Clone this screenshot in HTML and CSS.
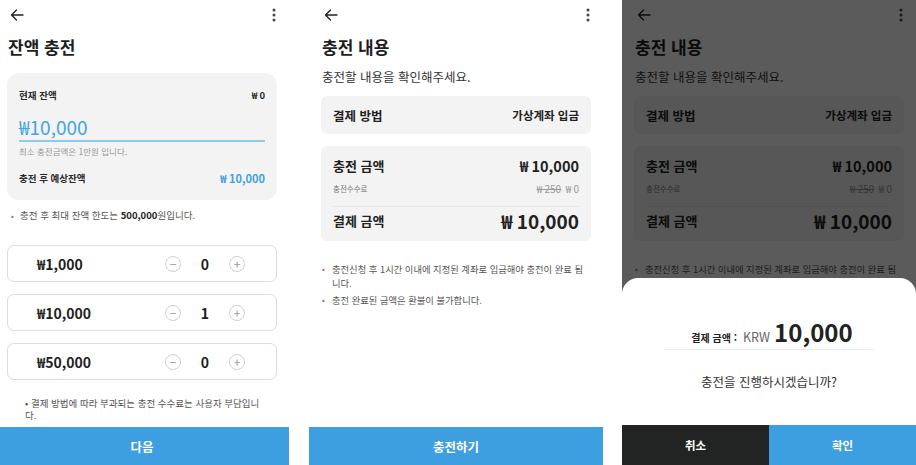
FILE: index.html
```html
<!DOCTYPE html>
<html lang="ko">
<head>
<meta charset="utf-8">
<link rel="stylesheet" href="styles.css">
</head>
<body>
<div class="screens">
  <!-- Screen 1 -->
  <section class="screen screen-first">
    <header class="topbar">
      <svg class="ico-back" width="14" height="12" viewBox="0 0 14 12"><path d="M13 6H1.5M6.5 1L1.5 6l5 5" fill="none" stroke="#222" stroke-width="1.4" stroke-linecap="round" stroke-linejoin="round"/></svg>
      <svg class="ico-more" width="4" height="14" viewBox="0 0 4 14"><circle cx="2" cy="2" r="1.5" fill="#444"/><circle cx="2" cy="7" r="1.5" fill="#444"/><circle cx="2" cy="12" r="1.5" fill="#444"/></svg>
    </header>
    <div class="content c1">
      <h1 class="title">잔액 충전</h1>
      <div class="balance-card">
        <div class="row-between">
          <span class="lbl-bold">현재 잔액</span>
          <span class="lbl-bold">₩ 0</span>
        </div>
        <div class="amount-input">₩10,000</div>
        <div class="hint">최소 충전금액은 1만원 입니다.</div>
        <div class="row-between expected">
          <span class="lbl-bold">충전 후 예상잔액</span>
          <span class="blue-amount">₩ 10,000</span>
        </div>
      </div>
      <p class="note-limit"><span class="dot">•</span>충전 후 최대 잔액 한도는 <b>500,000</b>원입니다.</p>
      <div class="qty-list">
        <div class="qty-row">
          <span class="qty-label">₩1,000</span>
          <div class="stepper">
            <span class="circ">−</span><span class="count">0</span><span class="circ">+</span>
          </div>
        </div>
        <div class="qty-row">
          <span class="qty-label">₩10,000</span>
          <div class="stepper">
            <span class="circ">−</span><span class="count">1</span><span class="circ">+</span>
          </div>
        </div>
        <div class="qty-row">
          <span class="qty-label">₩50,000</span>
          <div class="stepper">
            <span class="circ">−</span><span class="count">0</span><span class="circ">+</span>
          </div>
        </div>
      </div>
      <p class="note-fee">• 결제 방법에 따라 부과되는 충전 수수료는 사용자 부담입니다.</p>
    </div>
    <button class="cta">다음</button>
  </section>

  <!-- Screen 2 -->
  <section class="screen">
    <header class="topbar">
      <svg class="ico-back" width="14" height="12" viewBox="0 0 14 12"><path d="M13 6H1.5M6.5 1L1.5 6l5 5" fill="none" stroke="#222" stroke-width="1.4" stroke-linecap="round" stroke-linejoin="round"/></svg>
      <svg class="ico-more" width="4" height="14" viewBox="0 0 4 14"><circle cx="2" cy="2" r="1.5" fill="#444"/><circle cx="2" cy="7" r="1.5" fill="#444"/><circle cx="2" cy="12" r="1.5" fill="#444"/></svg>
    </header>
    <div class="content c2">
      <h1 class="title">충전 내용</h1>
      <p class="subtitle">충전할 내용을 확인해주세요.</p>
      <div class="method-card">
        <span class="m-label">결제 방법</span>
        <span class="m-value">가상계좌 입금</span>
      </div>
      <div class="sum-card">
        <div class="row-between s-row1">
          <span class="s-label">충전 금액</span>
          <span class="s-amt">₩ 10,000</span>
        </div>
        <div class="row-between s-fee">
          <span class="fee-lbl">충전수수료</span>
          <span class="fee-val"><s>₩ 250</s>&nbsp;&nbsp;₩ 0</span>
        </div>
        <div class="row-between s-total">
          <span class="s-label">결제 금액</span>
          <span class="s-big">₩ 10,000</span>
        </div>
      </div>
      <ul class="notes">
        <li>충전신청 후 1시간 이내에 지정된 계좌로 입금해야 충전이 완료 됩니다.</li>
        <li>충전 완료된 금액은 환불이 불가합니다.</li>
      </ul>
    </div>
    <button class="cta">충전하기</button>
  </section>

  <!-- Screen 3 -->
  <section class="screen">
    <header class="topbar">
      <svg class="ico-back" width="14" height="12" viewBox="0 0 14 12"><path d="M13 6H1.5M6.5 1L1.5 6l5 5" fill="none" stroke="#222" stroke-width="1.4" stroke-linecap="round" stroke-linejoin="round"/></svg>
      <svg class="ico-more" width="4" height="14" viewBox="0 0 4 14"><circle cx="2" cy="2" r="1.5" fill="#444"/><circle cx="2" cy="7" r="1.5" fill="#444"/><circle cx="2" cy="12" r="1.5" fill="#444"/></svg>
    </header>
    <div class="content c2">
      <h1 class="title">충전 내용</h1>
      <p class="subtitle">충전할 내용을 확인해주세요.</p>
      <div class="method-card">
        <span class="m-label">결제 방법</span>
        <span class="m-value">가상계좌 입금</span>
      </div>
      <div class="sum-card">
        <div class="row-between s-row1">
          <span class="s-label">충전 금액</span>
          <span class="s-amt">₩ 10,000</span>
        </div>
        <div class="row-between s-fee">
          <span class="fee-lbl">충전수수료</span>
          <span class="fee-val"><s>₩ 250</s>&nbsp;&nbsp;₩ 0</span>
        </div>
        <div class="row-between s-total">
          <span class="s-label">결제 금액</span>
          <span class="s-big">₩ 10,000</span>
        </div>
      </div>
      <ul class="notes">
        <li>충전신청 후 1시간 이내에 지정된 계좌로 입금해야 충전이 완료 됩니다.</li>
        <li>충전 완료된 금액은 환불이 불가합니다.</li>
      </ul>
    </div>
    <button class="cta">충전하기</button>
    <div class="dim"></div>
    <div class="sheet">
      <div class="pay-line">
        <span class="pay-lbl">결제 금액 :</span>
        <span class="pay-cur">KRW</span>
        <span class="pay-num">10,000</span>
      </div>
      <p class="question">충전을 진행하시겠습니까?</p>
      <div class="sheet-btns">
        <button class="btn-cancel">취소</button>
        <button class="btn-ok">확인</button>
      </div>
    </div>
  </section>
</div>
</body>
</html>
```

FILE: styles.css
```css
* { box-sizing: border-box; margin: 0; padding: 0; }
html, body { width: 916px; height: 465px; overflow: hidden; background: #fff; }
body {
  font-family: "Noto Sans CJK KR", "Noto Sans", sans-serif;
  color: #222;
}
.screens {
  display: flex;
  gap: 20px;
  height: 465px;
}
.screen {
  position: relative;
  width: 294px;
  height: 465px;
  flex: none;
  display: flex;
  flex-direction: column;
  background: #fff;
  overflow: hidden;
}
.screen-first { margin-left: -5px; }
.screen + .screen + .screen { margin-left: -1px; }

.topbar {
  height: 30px;
  display: flex;
  align-items: center;
  justify-content: space-between;
  padding: 0 13px 0 15px;
}
.ico-back { display: block; }
.ico-more { display: block; }

.content { padding: 0 12px; display: flex; flex-direction: column; }

.title {
  font-size: 17px;
  font-weight: 700;
  line-height: 24px;
  margin-top: 5px;
  padding-left: 1px;
  color: #1e1e1e;
}

/* Screen 1 */
.balance-card {
  margin-top: 14px;
  background: #f3f3f3;
  border-radius: 12px;
  padding: 14px 12px 14px 12px;
}
.row-between { display: flex; justify-content: space-between; align-items: center; }
.lbl-bold { font-size: 9.5px; font-weight: 700; line-height: 16px; color: #2a2a2a; }
.amount-input {
  margin-top: 12px;
  font-size: 19px;
  line-height: 24px;
  color: #42a6e0;
  border-bottom: 2px solid #8fcaee;
  padding-bottom: 1px;
}
.hint { margin-top: 3px; font-size: 8.5px; line-height: 12px; color: #999; }
.expected { margin-top: 13px; }
.blue-amount { font-size: 11px; font-weight: 700; color: #3fa3df; line-height: 16px; }

.note-limit {
  margin-top: 8px;
  font-size: 9.5px;
  line-height: 14px;
  color: #555;
  padding-left: 4px;
}
.note-limit b { color: #222; font-weight: 700; }
.dot { display: inline-block; width: 9px; color: #777; font-size: 8px; }

.qty-list { margin-top: 22px; display: flex; flex-direction: column; gap: 12px; }
.qty-row {
  height: 37px;
  border: 1px solid #dcdcdc;
  border-radius: 7px;
  display: flex;
  align-items: center;
  justify-content: space-between;
  padding: 0 31px 0 29px;
}
.qty-label { font-size: 14px; font-weight: 700; color: #1e1e1e; }
.stepper { display: flex; align-items: center; }
.circ {
  width: 16px; height: 16px;
  border: 1px solid #d0d0d0;
  border-radius: 50%;
  display: flex; align-items: center; justify-content: center;
  font-size: 12px; color: #999; line-height: 1;
}
.count { width: 48px; text-align: center; font-size: 14px; font-weight: 700; color: #1e1e1e; }

.note-fee {
  margin-top: 17px;
  padding: 0 16px 0 18px;
  font-size: 9.5px;
  line-height: 12px;
  color: #555;
  word-break: break-all;
}

.cta {
  margin-top: auto;
  height: 38px;
  border: none;
  background: #3d9ee0;
  color: #fff;
  font-family: inherit;
  font-size: 12.5px;
  font-weight: 700;
  width: 100%;
  flex: none;
}

/* Screen 2 */
.c2 { padding: 0 12px; }
.subtitle { margin-top: 9px; font-size: 12.5px; line-height: 18px; color: #333; padding-left: 1px; }
.method-card {
  margin-top: 10px;
  height: 38px;
  background: #f3f3f3;
  border-radius: 6px;
  display: flex; align-items: center; justify-content: space-between;
  padding: 0 12px;
}
.m-label { font-size: 12.5px; font-weight: 700; color: #222; }
.m-value { font-size: 11.5px; font-weight: 700; color: #222; }
.sum-card {
  margin-top: 12px;
  background: #f3f3f3;
  border-radius: 6px;
  padding: 9px 12px 8px;
}
.s-row1 { height: 20px; }
.s-label { font-size: 13px; font-weight: 700; color: #222; }
.s-amt { font-size: 14.5px; font-weight: 700; color: #222; }
.s-fee { margin-top: 6px; height: 14px; }
.fee-lbl { font-size: 7.5px; color: #777; }
.fee-val { font-size: 10px; color: #999; }
.fee-val s { color: #999; }
.s-total {
  margin-top: 11px;
  border-top: 1px solid #e6e6e6;
  height: 27px;
  padding-top: 1px;
}
.s-big { font-size: 19px; font-weight: 700; color: #222; }

.notes {
  list-style: none;
  margin-top: 21px;
  padding: 0 6px 0 1px;
}
.notes li {
  position: relative;
  padding-left: 10px;
  font-size: 9.3px;
  line-height: 14px;
  color: #555;
  margin-bottom: 3px;
}
.notes li::before {
  content: "•";
  position: absolute;
  left: 0;
  font-size: 8px;
  color: #777;
}

/* Screen 3 overlay + sheet */
.dim {
  position: absolute;
  inset: 0;
  background: rgba(0, 0, 0, 0.645);
}
.sheet {
  position: absolute;
  left: 0; right: 0; bottom: 0;
  height: 187px;
  background: #fff;
  border-radius: 16px 16px 0 0;
  display: flex;
  flex-direction: column;
  align-items: center;
  padding-top: 39px;
}
.pay-line {
  width: 211px;
  display: flex;
  align-items: baseline;
  justify-content: center;
  height: 33px;
  border-bottom: 1px solid #eeeeee;
  padding-left: 6px;
}
.pay-lbl { font-size: 10px; font-weight: 700; color: #222; margin-right: 6px; }
.pay-cur { font-size: 12.5px; color: #666; margin-right: 4px; }
.pay-num { font-size: 24px; font-weight: 700; color: #222; line-height: 30px; }
.question { margin-top: 23px; font-size: 12.5px; line-height: 18px; color: #333; }
.sheet-btns { margin-top: auto; display: flex; width: 100%; height: 40px; }
.sheet-btns button {
  flex: 1;
  border: none;
  font-family: inherit;
  font-size: 11.5px;
  font-weight: 700;
  color: #fff;
}
.btn-cancel { background: #222423; }
.btn-ok { background: #3d9ee0; }
```
